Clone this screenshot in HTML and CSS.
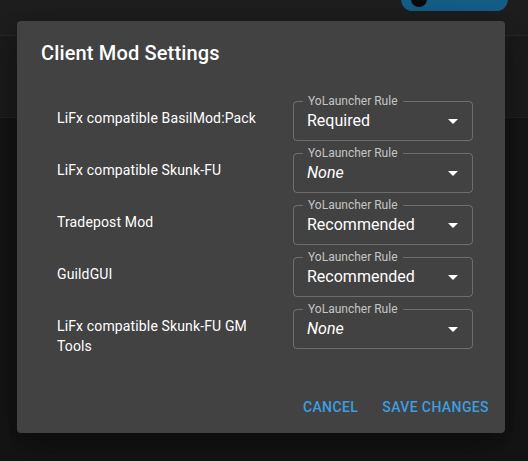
FILE: index.html
```html
<!DOCTYPE html>
<html>
<head>
  <title>Client Mod Settings</title>
  <link rel="stylesheet" href="styles.css">
</head>
<body>
  <div class="app-bar">
    <div class="toggle-pill"><span class="toggle-knob"></span></div>
  </div>
  <div class="toolbar"></div>
  <div class="page"></div>

  <div class="dialog">
    <h2 class="dialog-title">Client Mod Settings</h2>
    <div class="dialog-content">
      <div class="mod-row">
        <div class="mod-name">LiFx compatible BasilMod:Pack</div>
        <div class="rule-select">
          <span class="rule-label">YoLauncher Rule</span>
          <span class="rule-value">Required</span>
          <svg class="rule-arrow" viewBox="0 0 24 24"><path d="M7 10l5 5 5-5z"/></svg>
        </div>
      </div>
      <div class="mod-row">
        <div class="mod-name">LiFx compatible Skunk-FU</div>
        <div class="rule-select">
          <span class="rule-label">YoLauncher Rule</span>
          <span class="rule-value none">None</span>
          <svg class="rule-arrow" viewBox="0 0 24 24"><path d="M7 10l5 5 5-5z"/></svg>
        </div>
      </div>
      <div class="mod-row">
        <div class="mod-name">Tradepost Mod</div>
        <div class="rule-select">
          <span class="rule-label">YoLauncher Rule</span>
          <span class="rule-value">Recommended</span>
          <svg class="rule-arrow" viewBox="0 0 24 24"><path d="M7 10l5 5 5-5z"/></svg>
        </div>
      </div>
      <div class="mod-row">
        <div class="mod-name">GuildGUI</div>
        <div class="rule-select">
          <span class="rule-label">YoLauncher Rule</span>
          <span class="rule-value">Recommended</span>
          <svg class="rule-arrow" viewBox="0 0 24 24"><path d="M7 10l5 5 5-5z"/></svg>
        </div>
      </div>
      <div class="mod-row">
        <div class="mod-name">LiFx compatible Skunk-FU GM Tools</div>
        <div class="rule-select">
          <span class="rule-label">YoLauncher Rule</span>
          <span class="rule-value none">None</span>
          <svg class="rule-arrow" viewBox="0 0 24 24"><path d="M7 10l5 5 5-5z"/></svg>
        </div>
      </div>
    </div>
    <div class="dialog-actions">
      <button class="text-button">Cancel</button>
      <button class="text-button">Save Changes</button>
    </div>
  </div>
</body>
</html>
```

FILE: styles.css
```css
body {
  font-family: Roboto, "Liberation Sans", sans-serif;
  margin: 0;
  background-color: #151515;
  color: #fff;
  overflow: hidden;
}

.app-bar {
  height: 35px;
  background-color: #1e1e1e;
  border-bottom: 1px solid #262626;
  position: relative;
}

.toggle-pill {
  position: absolute;
  left: 401px;
  top: -12px;
  width: 107px;
  height: 23px;
  border-radius: 12px;
  background-color: #145e88;
}

.toggle-knob {
  position: absolute;
  left: 10px;
  top: 3px;
  width: 16px;
  height: 16px;
  border-radius: 50%;
  background-color: #0b0b0b;
}

.toolbar {
  height: 81px;
  background-color: #1b1b1b;
  border-bottom: 1px solid #222;
}

.dialog {
  position: absolute;
  left: 17px;
  top: 21px;
  width: 488px;
  height: 412px;
  background-color: #424242;
  border-radius: 4px;
  box-shadow: 0 11px 15px -7px rgba(0, 0, 0, 0.2), 0 24px 38px 3px rgba(0, 0, 0, 0.14), 0 9px 46px 8px rgba(0, 0, 0, 0.12);
  display: flex;
  flex-direction: column;
}

.dialog-title {
  margin: 0;
  padding: 16px 24px;
  font-size: 20px;
  font-weight: 500;
  line-height: 32px;
  letter-spacing: 0.0075em;
}

.dialog-content {
  flex: 1;
  padding: 16px 32px 0 40px;
}

.mod-row {
  display: grid;
  grid-template-columns: 220px 180px;
  column-gap: 16px;
  margin-bottom: 12px;
}

.mod-name {
  font-size: 14px;
  line-height: 20px;
  padding-top: 7px;
  letter-spacing: 0.01em;
}

.rule-select {
  position: relative;
  height: 38px;
  border: 1px solid rgba(255, 255, 255, 0.23);
  border-radius: 4px;
  display: flex;
  align-items: center;
  padding: 0 13px;
}

.rule-label {
  position: absolute;
  left: 9px;
  top: -8px;
  padding: 0 5px;
  background-color: #424242;
  font-size: 12px;
  line-height: 14px;
  color: rgba(255, 255, 255, 0.7);
}

.rule-value {
  flex: 1;
  font-size: 16px;
  line-height: 19px;
  padding-bottom: 1px;
}

.rule-value.none {
  font-style: italic;
}

.rule-arrow {
  position: absolute;
  right: 7px;
  top: 7px;
  width: 24px;
  height: 24px;
  fill: #fff;
}

.dialog-actions {
  display: flex;
  justify-content: flex-end;
  gap: 8px;
  padding: 8px;
}

.text-button {
  font-family: Roboto, "Liberation Sans", sans-serif;
  font-size: 14px;
  font-weight: 500;
  letter-spacing: 0.02857em;
  text-transform: uppercase;
  color: #3d9ee0;
  background: none;
  border: none;
  padding: 6px 8px;
  height: 36px;
  border-radius: 4px;
}
```
